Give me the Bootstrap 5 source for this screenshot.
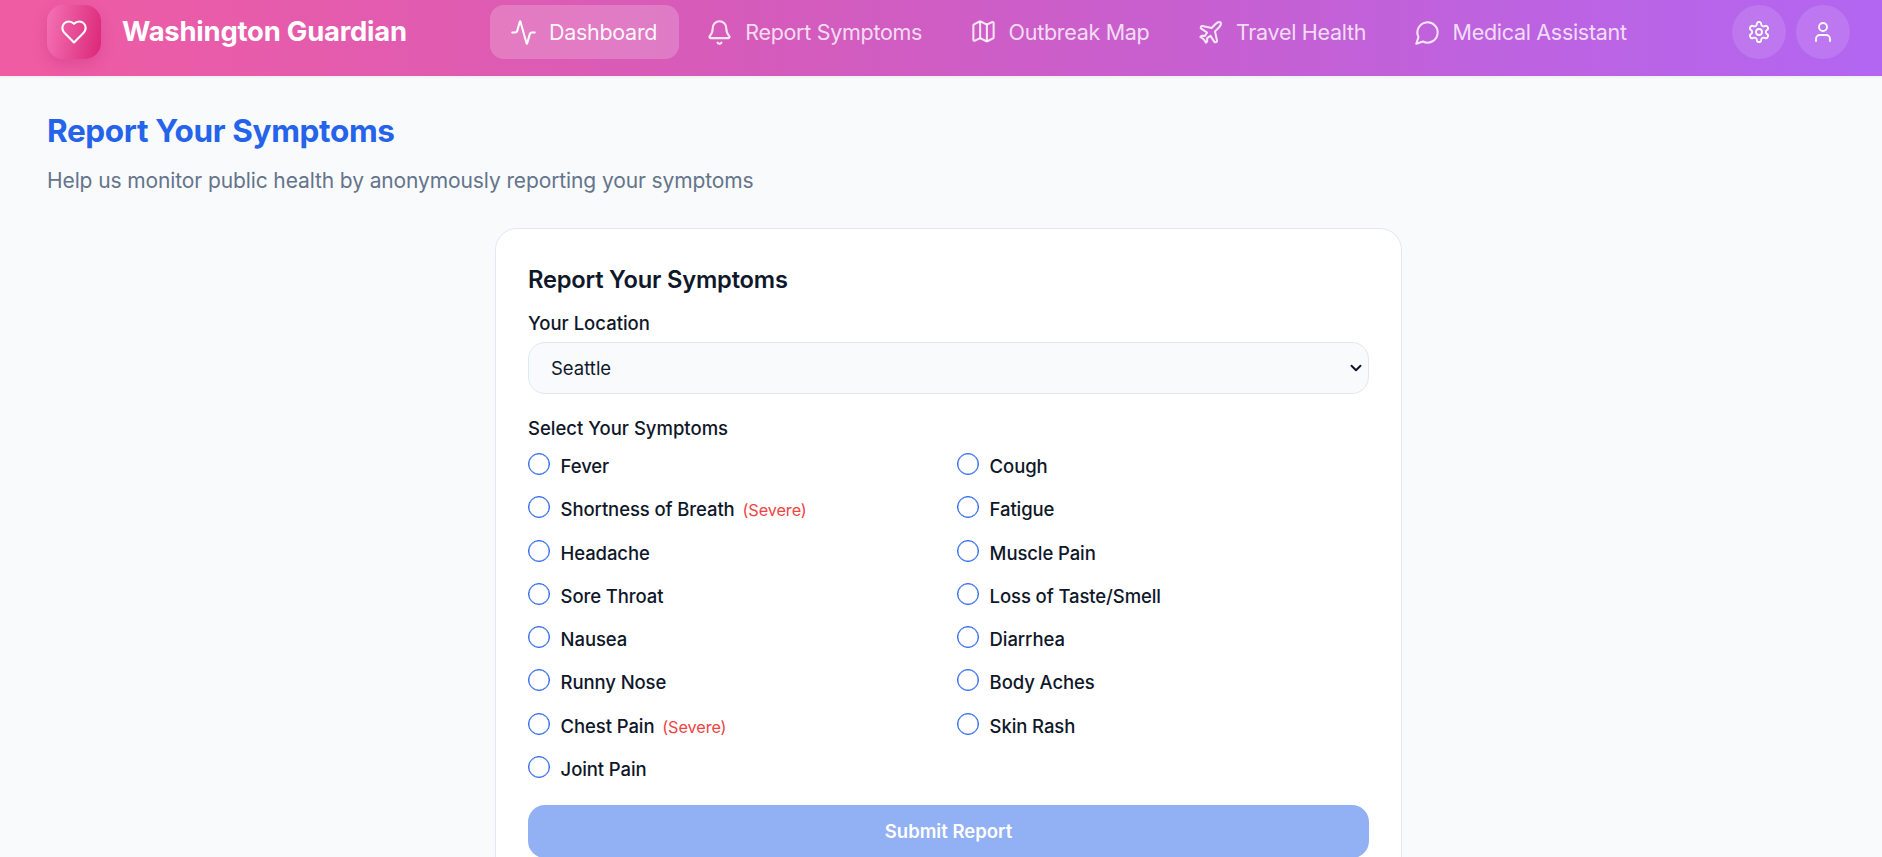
<!DOCTYPE html>
<html lang="en">
<head>
<meta charset="utf-8">
<title>Washington Guardian</title>
<link href="https://cdn.jsdelivr.net/npm/bootstrap@5.3.0/dist/css/bootstrap.min.css" rel="stylesheet">
<style>
html,body{height:857px;overflow:hidden}
body{font-family:"Inter","Liberation Sans",sans-serif;background:#f8fafc;color:#0f172a}
.wg-bar{height:76px;padding:5px 32px 17px 47px;background:linear-gradient(90deg,#f05ca2,#d55bbb 40%,#b266f2);box-shadow:0 1px 3px rgba(0,0,0,.06)}
.wg-logo{width:54px;height:54px;border-radius:16px;background:linear-gradient(100deg,#f472b6,#db2777);box-shadow:0 6px 14px rgba(190,40,120,.3)}
.wg-brand{font-size:27.4px;font-weight:700;color:#fff;margin-left:21px;width:368px;letter-spacing:-.2px}
.wg-link{height:54px;padding:0 22px 0 20px;border-radius:14px;color:rgba(255,255,255,.8);font-size:21.5px;text-decoration:none;gap:12px;letter-spacing:-.3px;margin-right:5.5px;white-space:nowrap}
.wg-link svg{flex:none}
.wg-link.wg-on{background:rgba(255,255,255,.2);color:rgba(255,255,255,.95);margin-right:7px}
.wg-round{width:54px;height:54px;border-radius:50%;border:0;background:rgba(255,255,255,.12);padding:0}
.wg-tools{gap:10px}
.wg-main{padding:0 47px;height:781px;overflow:hidden}
.wg-h1{font-size:31.5px;font-weight:700;color:#2563eb;margin:35px 0 0;line-height:40px;letter-spacing:-.35px}
.wg-sub{font-size:21px;color:#64748b;margin:15px 0 0;line-height:30px;letter-spacing:-.11px}
.wg-panel{width:907px;margin:32px 0 0 448px;background:#fff;border:1px solid #e2e8f0;border-radius:22px;padding:36px 32px 60px}
.wg-h2{font-size:23.7px;font-weight:600;line-height:30px;margin:0 0 15px;letter-spacing:-.2px}
.wg-label{display:block;font-size:18.5px;font-weight:500;line-height:26px;margin-bottom:6px}
.wg-select.form-select{height:52px;font-size:18.5px;color:#0f172a;background-color:#f8fafc;border:1px solid #e2e8f0;border-radius:17px;padding:1px 22px 0;background-image:url("data:image/svg+xml,%3csvg xmlns='http://www.w3.org/2000/svg' viewBox='0 0 16 16'%3e%3cpath fill='none' stroke='%230f172a' stroke-linecap='round' stroke-linejoin='round' stroke-width='2.6' d='m2 5 6 6 6-6'/%3e%3c/svg%3e");background-size:16px 12px;background-position:right 4px center;box-shadow:none}
.wg-gap{margin-top:21px;margin-bottom:12px}
.wg-grid{row-gap:0;margin:0}
.wg-cell{padding:0;height:43.3px}
.wg-cell.wg-left{width:429px;flex:none}
.wg-cell.wg-right{width:411px;flex:none}
.wg-check{display:flex;align-items:flex-start;margin:0;padding:0;min-height:0;gap:10.6px}
.wg-check .form-check-input{float:none;margin:0;width:22px;height:22px;flex:none;border:1px solid #2563eb;background-color:#fff;box-shadow:inset 0 0 0 .3px #2563eb}
.wg-check .form-check-label{font-size:18.5px;font-weight:500;line-height:26px;margin-left:0;letter-spacing:-.1px}
.wg-sev{font-size:16.3px;color:#ef4444;font-weight:400;margin-left:3px}
.wg-submit.btn{display:block;width:100%;height:53px;margin-top:6px;background:#92b1f4;border:0;border-radius:17px;color:#fff;font-size:18.5px;font-weight:600;opacity:1}
</style>
</head>
<body>
<nav class="wg-bar d-flex align-items-center">
  <div class="wg-logo d-flex align-items-center justify-content-center flex-shrink-0">
    <svg width="28" height="28" viewBox="0 0 24 24" fill="none" stroke="#fff" stroke-width="1.8" stroke-linecap="round" stroke-linejoin="round"><path d="M19 14c1.49-1.46 3-3.21 3-5.5A5.5 5.5 0 0 0 16.5 3c-1.76 0-3 .5-4.5 2-1.5-1.5-2.74-2-4.5-2A5.5 5.5 0 0 0 2 8.5c0 2.3 1.5 4.05 3 5.5l7 7Z"/></svg>
  </div>
  <div class="wg-brand flex-shrink-0">Washington Guardian</div>
  <a class="wg-link wg-on d-flex align-items-center" href="#">
    <svg width="27" height="27" viewBox="0 0 24 24" fill="none" stroke="#fff" stroke-width="1.8" stroke-linecap="round" stroke-linejoin="round"><path d="M22 12h-2.48a2 2 0 0 0-1.93 1.46l-2.35 8.36a.25.25 0 0 1-.48 0L9.24 2.18a.25.25 0 0 0-.48 0l-2.35 8.36A2 2 0 0 1 4.49 12H2"/></svg>
    Dashboard</a>
  <a class="wg-link d-flex align-items-center" href="#">
    <svg width="27" height="27" viewBox="0 0 24 24" fill="none" stroke="rgba(255,255,255,.85)" stroke-width="1.8" stroke-linecap="round" stroke-linejoin="round"><path d="M10.27 21a2 2 0 0 0 3.46 0"/><path d="M3.26 15.33A1 1 0 0 0 4 17h16a1 1 0 0 0 .74-1.67C19.41 13.96 18 12.5 18 8A6 6 0 0 0 6 8c0 4.5-1.41 5.96-2.74 7.33"/></svg>
    Report Symptoms</a>
  <a class="wg-link d-flex align-items-center" href="#">
    <svg width="27" height="27" viewBox="0 0 24 24" fill="none" stroke="rgba(255,255,255,.85)" stroke-width="1.8" stroke-linecap="round" stroke-linejoin="round"><path d="M14.1 4.55a2 2 0 0 0 1.79 0l3.66-1.83A1 1 0 0 1 21 3.62v12.76a1 1 0 0 1-.55.9l-4.55 2.27a2 2 0 0 1-1.79 0l-4.21-2.1a2 2 0 0 0-1.79 0l-3.66 1.83A1 1 0 0 1 3 18.38V5.62a1 1 0 0 1 .55-.9L8.1 2.45a2 2 0 0 1 1.79 0Z"/><path d="M15 5v14.6"/><path d="M9 2.5v14.6"/></svg>
    Outbreak Map</a>
  <a class="wg-link d-flex align-items-center" href="#">
    <svg width="27" height="27" viewBox="0 0 24 24" fill="none" stroke="rgba(255,255,255,.85)" stroke-width="1.8" stroke-linecap="round" stroke-linejoin="round"><path d="M17.8 19.2 16 11l3.5-3.5C21 6 21.5 4 21 3c-1-.5-3 0-4.5 1.5L13 8 4.8 6.2c-.5-.1-.9.1-1.1.5l-.3.5c-.2.5-.1 1 .3 1.3L9 12l-2 3H4l-1 1 3 2 2 3 1-1v-3l3-2 3.5 5.3c.3.4.8.5 1.3.3l.5-.2c.4-.3.6-.7.5-1.2z"/></svg>
    Travel Health</a>
  <a class="wg-link d-flex align-items-center" href="#">
    <svg width="27" height="27" viewBox="0 0 24 24" fill="none" stroke="rgba(255,255,255,.85)" stroke-width="1.8" stroke-linecap="round" stroke-linejoin="round"><path d="M7.9 20A9 9 0 1 0 4 16.1L2 22Z"/></svg>
    Medical Assistant</a>
  <div class="d-flex ms-auto wg-tools flex-shrink-0">
    <button class="wg-round d-flex align-items-center justify-content-center" aria-label="Settings">
      <svg width="24" height="24" viewBox="0 0 24 24" fill="none" stroke="#fff" stroke-width="1.8" stroke-linecap="round" stroke-linejoin="round"><path d="M12.22 2h-.44a2 2 0 0 0-2 2v.18a2 2 0 0 1-1 1.73l-.43.25a2 2 0 0 1-2 0l-.15-.08a2 2 0 0 0-2.73.73l-.22.38a2 2 0 0 0 .73 2.73l.15.1a2 2 0 0 1 1 1.72v.51a2 2 0 0 1-1 1.74l-.15.09a2 2 0 0 0-.73 2.73l.22.38a2 2 0 0 0 2.73.73l.15-.08a2 2 0 0 1 2 0l.43.25a2 2 0 0 1 1 1.73V20a2 2 0 0 0 2 2h.44a2 2 0 0 0 2-2v-.18a2 2 0 0 1 1-1.73l.43-.25a2 2 0 0 1 2 0l.15.08a2 2 0 0 0 2.73-.73l.22-.39a2 2 0 0 0-.73-2.73l-.15-.08a2 2 0 0 1-1-1.74v-.5a2 2 0 0 1 1-1.74l.15-.09a2 2 0 0 0 .73-2.73l-.22-.38a2 2 0 0 0-2.73-.73l-.15.08a2 2 0 0 1-2 0l-.43-.25a2 2 0 0 1-1-1.73V4a2 2 0 0 0-2-2z"/><circle cx="12" cy="12" r="3"/></svg>
    </button>
    <button class="wg-round d-flex align-items-center justify-content-center" aria-label="Profile">
      <svg width="24" height="24" viewBox="0 0 24 24" fill="none" stroke="#fff" stroke-width="1.8" stroke-linecap="round" stroke-linejoin="round"><path d="M19 21v-2a4 4 0 0 0-4-4H9a4 4 0 0 0-4 4v2"/><circle cx="12" cy="7" r="4"/></svg>
    </button>
  </div>
</nav>
<main class="wg-main">
  <h1 class="wg-h1">Report Your Symptoms</h1>
  <p class="wg-sub">Help us monitor public health by anonymously reporting your symptoms</p>
  <section class="wg-panel">
    <h2 class="wg-h2">Report Your Symptoms</h2>
    <label class="wg-label" for="loc">Your Location</label>
    <select class="form-select wg-select" id="loc"><option>Seattle</option></select>
    <div class="wg-label wg-gap">Select Your Symptoms</div>
    <div class="row wg-grid">
      <div class="wg-cell wg-left"><div class="wg-check form-check"><input class="form-check-input" type="radio" id="s1"><label class="form-check-label" for="s1">Fever</label></div></div>
      <div class="wg-cell wg-right"><div class="wg-check form-check"><input class="form-check-input" type="radio" id="s2"><label class="form-check-label" for="s2">Cough</label></div></div>
      <div class="wg-cell wg-left"><div class="wg-check form-check"><input class="form-check-input" type="radio" id="s3"><label class="form-check-label" for="s3">Shortness of Breath <span class="wg-sev">(Severe)</span></label></div></div>
      <div class="wg-cell wg-right"><div class="wg-check form-check"><input class="form-check-input" type="radio" id="s4"><label class="form-check-label" for="s4">Fatigue</label></div></div>
      <div class="wg-cell wg-left"><div class="wg-check form-check"><input class="form-check-input" type="radio" id="s5"><label class="form-check-label" for="s5">Headache</label></div></div>
      <div class="wg-cell wg-right"><div class="wg-check form-check"><input class="form-check-input" type="radio" id="s6"><label class="form-check-label" for="s6">Muscle Pain</label></div></div>
      <div class="wg-cell wg-left"><div class="wg-check form-check"><input class="form-check-input" type="radio" id="s7"><label class="form-check-label" for="s7">Sore Throat</label></div></div>
      <div class="wg-cell wg-right"><div class="wg-check form-check"><input class="form-check-input" type="radio" id="s8"><label class="form-check-label" for="s8">Loss of Taste/Smell</label></div></div>
      <div class="wg-cell wg-left"><div class="wg-check form-check"><input class="form-check-input" type="radio" id="s9"><label class="form-check-label" for="s9">Nausea</label></div></div>
      <div class="wg-cell wg-right"><div class="wg-check form-check"><input class="form-check-input" type="radio" id="s10"><label class="form-check-label" for="s10">Diarrhea</label></div></div>
      <div class="wg-cell wg-left"><div class="wg-check form-check"><input class="form-check-input" type="radio" id="s11"><label class="form-check-label" for="s11">Runny Nose</label></div></div>
      <div class="wg-cell wg-right"><div class="wg-check form-check"><input class="form-check-input" type="radio" id="s12"><label class="form-check-label" for="s12">Body Aches</label></div></div>
      <div class="wg-cell wg-left"><div class="wg-check form-check"><input class="form-check-input" type="radio" id="s13"><label class="form-check-label" for="s13">Chest Pain <span class="wg-sev">(Severe)</span></label></div></div>
      <div class="wg-cell wg-right"><div class="wg-check form-check"><input class="form-check-input" type="radio" id="s14"><label class="form-check-label" for="s14">Skin Rash</label></div></div>
      <div class="wg-cell wg-left"><div class="wg-check form-check"><input class="form-check-input" type="radio" id="s15"><label class="form-check-label" for="s15">Joint Pain</label></div></div>
    </div>
    <button class="btn wg-submit" type="button">Submit Report</button>
  </section>
</main>
<script src="https://cdn.jsdelivr.net/npm/bootstrap@5.3.0/dist/js/bootstrap.bundle.min.js"></script>
</body>
</html>
